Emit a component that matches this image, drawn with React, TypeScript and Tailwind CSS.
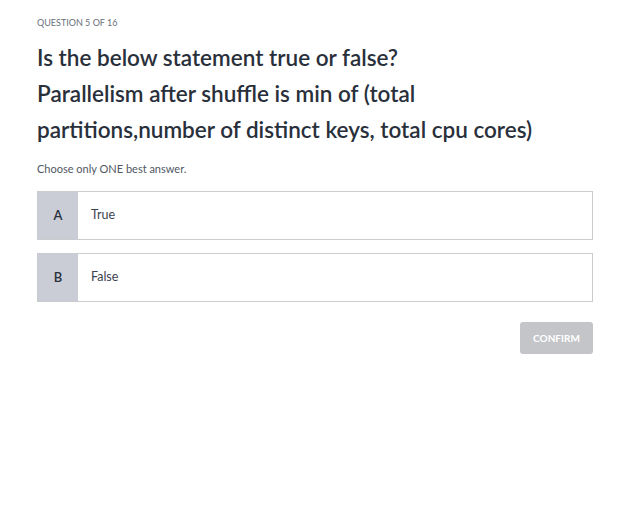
export default function App() {
  const opts = [
    { k: "A", t: "True" },
    { k: "B", t: "False" },
  ];
  return (
    <div
      className="w-[638px] h-[505px] bg-white text-[#29303b]"
      style={{ fontFamily: "Lato, 'Open Sans', sans-serif" }}
    >
      <div className="pl-[37px] pr-[45px] pt-[16px]">
        <div className="text-[9px] uppercase text-[#686f7a] leading-[14px]">
          Question 5 of 16
        </div>
        <div className="mt-[10px] text-[22.5px] font-semibold leading-[36px] text-[#29303b] whitespace-nowrap">
          <div>Is the below statement true or false?</div>
          <div>
            Parallelism after shuffle is min of (total
            <br />
            partitions,number of distinct keys, total cpu cores)
          </div>
        </div>
        <div className="mt-[14px] text-[11px] text-[#505763] leading-[14px]">
          Choose only ONE best answer.
        </div>
        <div className="mt-[15px] flex flex-col gap-[13px]">
          {opts.map((o) => (
            <div
              key={o.k}
              className="flex h-[49px] border border-[#cacbcf] bg-white"
            >
              <div className="w-[40px] bg-[#cacdd6] flex items-center justify-center text-[13px] font-semibold text-[#29303b]">
                {o.k}
              </div>
              <div className="flex items-center pl-[13px] text-[12.5px] text-[#3c4350]">
                {o.t}
              </div>
            </div>
          ))}
        </div>
        <div className="mt-[20px] flex justify-end">
          <button className="w-[73px] h-[32px] rounded-[3px] bg-[#c4c5c9] text-white text-[10px] font-bold uppercase">
            Confirm
          </button>
        </div>
      </div>
    </div>
  );
}
